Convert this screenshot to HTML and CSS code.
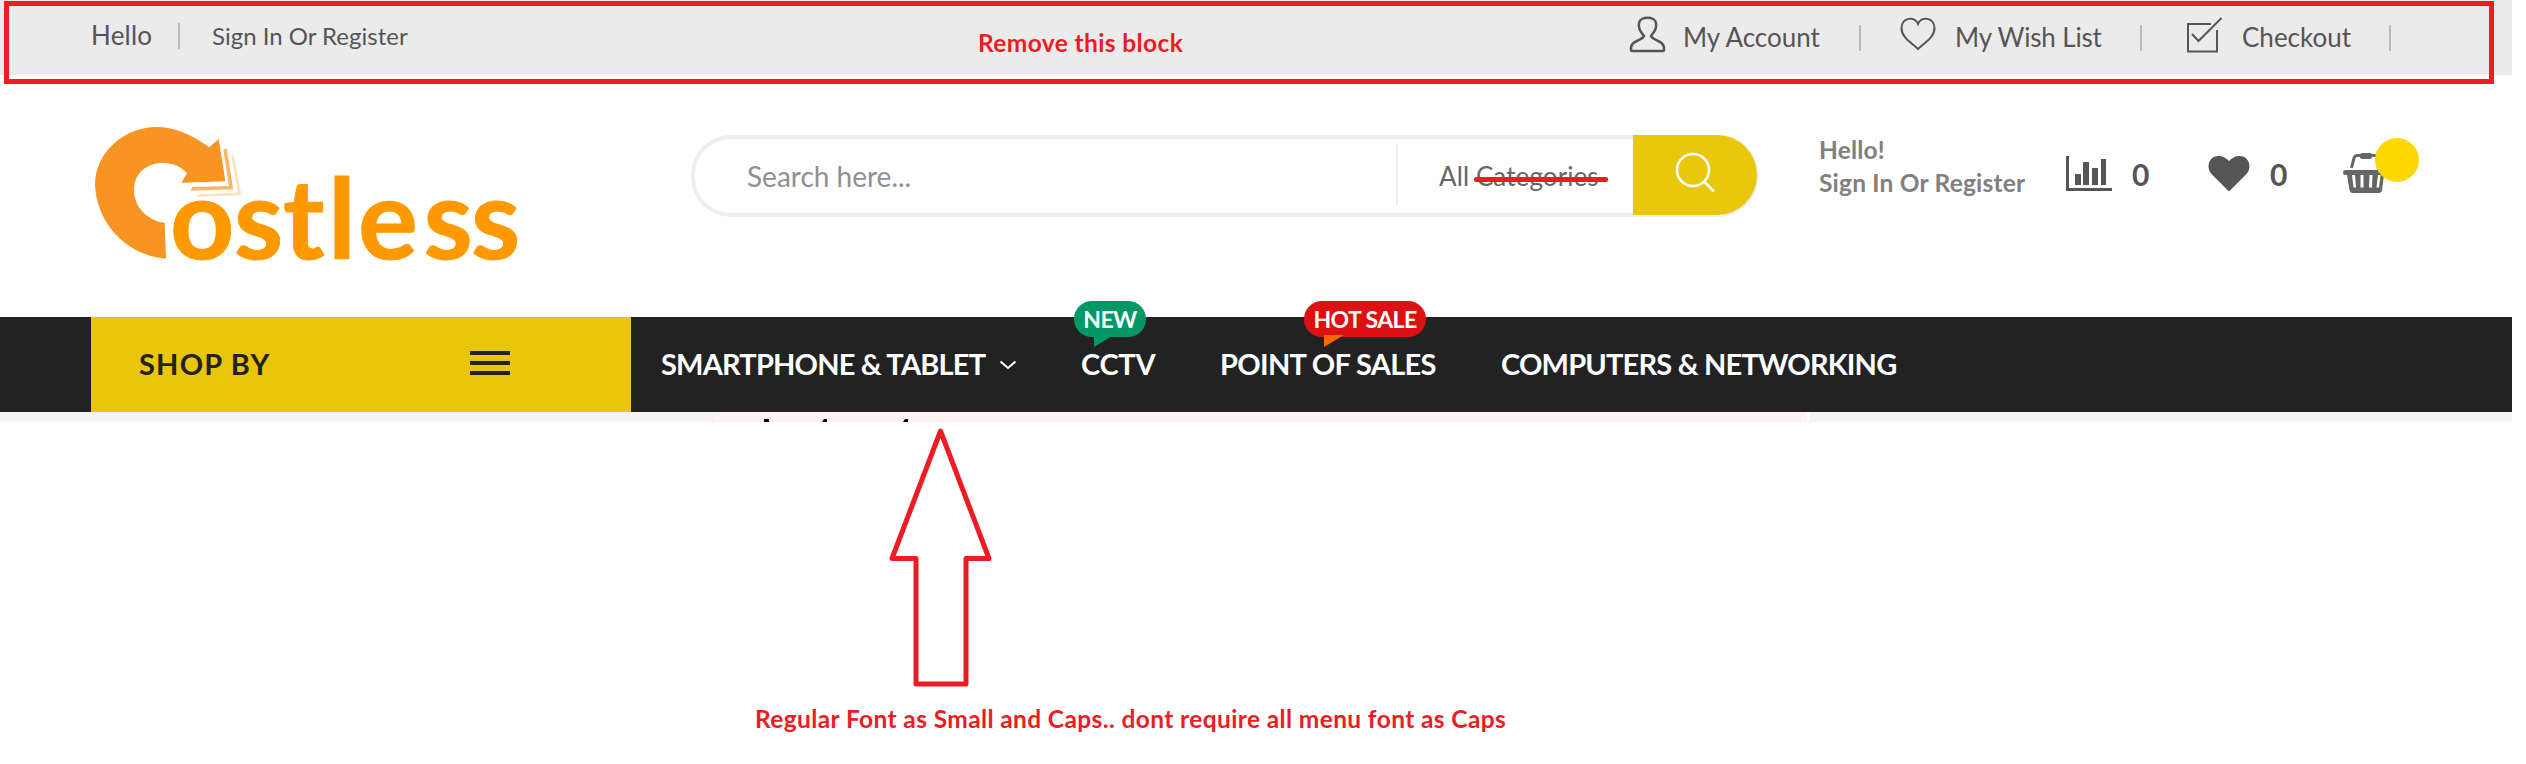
FILE: index.html
```html
<!DOCTYPE html>
<html lang="en">
<head>
<meta charset="utf-8">
<title>Costless</title>
<link rel="stylesheet" href="styles.css">
</head>
<body>
<div class="page">
  <div class="topbar">
    <span class="hello">Hello</span>
    <i class="sep sep-left"></i>
    <a class="signin">Sign In Or Register</a>
    <svg class="ico user" width="37" height="38" viewBox="0 0 37 38"><path d="M15 20C11 15 9 12 10 7C11 0 26 0 27 7C28 12 26 15 22 20C24 25 36 24 35 34Q35 35 34 35H3Q2 35 2 34C1 24 13 25 15 20Z"/></svg>
    <a class="link account">My Account</a>
    <i class="sep"></i>
    <svg class="ico heart" width="37" height="38" viewBox="0 0 37 38"><path d="M18 33C12 27 1 21 1.500 12C2 1 15 0 18 8C21 0 34 1 34.500 12C35 21 24 27 18 33Z"/></svg>
    <a class="link wish">My Wish List</a>
    <i class="sep"></i>
    <svg class="ico check" width="37" height="38" viewBox="0 0 37 38"><path d="M25 8H2V35.500H31V14M6 18L12.500 25L35.500 2"/></svg>
    <a class="link checkout">Checkout</a>
    <i class="sep"></i>
  </div>

  <header class="header">
    <svg class="logo" width="450" height="180" viewBox="0 0 450 180">
      <g transform="scale(.33333)">
        <path fill="#f79422" d="M258 446L254 339C200 330 162 290 162 240C162 190 200 159 248 159C280 159 305 170 321 190L304 218L436 214L416 87L388 112C330 70 280 51 230 51C130 51 45 130 45 225C50 340 140 437 258 446Z"/>
        <path fill="#fbb569" d="M430 120L440 115L460 238L331 242L337 231L447 228Z"/>
        <path fill="#fde0c1" d="M454 137L461 135L484 256L351 260L356 253L474 248Z"/>
      </g>
      <text class="logo-text" x="90 154 203 248 278 343.500 391" y="148.500">ostless</text>
    </svg>
    <div class="search">
      <span class="placeholder">Search here...</span>
      <span class="category"><span class="cat-text">All Categories</span><i class="strike"></i></span>
      <span class="search-btn"><svg width="40" height="40" viewBox="0 0 40 40"><circle cx="18" cy="18" r="16"/><path d="M29.500 30L39 39.500"/></svg></span>
    </div>
    <div class="greeting"><span class="g1">Hello!</span><span class="g2">Sign In Or Register</span></div>
    <svg class="bars" width="46" height="36" viewBox="0 0 46 36"><path d="M0 0H3V32H46V35H0ZM9 18H15V29H9ZM17 6H23V29H17ZM26 12H32V29H26ZM35 3H40V29H35Z"/></svg>
    <span class="count">0</span>
    <svg class="fav" width="42" height="36" viewBox="0 0 42 36"><path d="M21 35.500L3.500 18C-2 12 0 0 11 0C15 0 18 2 21 5C24 2 27 0 31 0C42 0 44 12 38.500 18Z"/></svg>
    <span class="count count-fav">0</span>
    <span class="cart">
      <svg width="46" height="42" viewBox="0 0 46 42"><path fill="none" stroke="#666" stroke-width="3" d="M8.500 16L11 6Q12 3.500 14 3.500H36"/><rect x="17" y="1" width="12" height="6" rx="2"/><path fill-rule="evenodd" d="M2 18H42Q44 18 44 20.500Q44 23 42 23H41L39 38Q38.500 41 36 41H10Q7 41 6.500 38L4 23H2Q0 23 0 20.500Q0 18 2 18ZM9 23L10.500 35.500H13L12 23ZM17.500 23V35.500H20.500V23ZM26.500 23L26 35.500H29L29.500 23ZM35 23L33.500 35.500H36L37.500 23Z"/></svg>
      <i class="cart-badge"></i>
    </span>
  </header>

  <nav class="nav">
    <div class="shop"><span class="shop-text">SHOP BY</span><span class="burger"><i></i><i></i><i></i></span></div>
    <a class="item smart">SMARTPHONE &amp; TABLET</a>
    <svg class="chev" width="18" height="10" viewBox="0 0 18 10"><path d="M1.500 1.500L9 8L16.500 1.500"/></svg>
    <a class="item cctv"><span class="t">CCTV</span><span class="badge new">NEW</span></a>
    <a class="item pos"><span class="t">POINT OF SALES</span><span class="badge hot">HOT SALE</span></a>
    <a class="item comp">COMPUTERS &amp; NETWORKING</a>
  </nav>
  <div class="strip"><div class="banner"><svg width="160" height="3" viewBox="0 0 160 3"><path d="M1 0H6V3H1ZM61 0H64V3H59ZM142 0H145V3H140Z"/></svg></div></div>
</div>

<div class="mark-box"></div>
<span class="mark note-top">Remove this block</span>
<svg class="mark arrow" width="106" height="264" viewBox="0 0 106 264"><path d="M52.500 5L4 132.500H28V258H78V132.500H101Z"/></svg>
<span class="mark note-bottom">Regular Font as Small and Caps.. dont require all menu font as Caps</span>
</body>
</html>
```
FILE: styles.css
```css
* { box-sizing: border-box; }
body { margin: 0; background: #fff; font-family: Lato, "Liberation Sans", sans-serif; width: 2526px; height: 764px; position: relative; overflow: hidden; }
.page { width: 2512px; }
span, a { white-space: nowrap; }
svg { display: block; flex: none; }

.topbar { height: 75px; background: #ebebeb; display: flex; align-items: flex-start; padding-left: 91px; color: #555; }
.hello { font-size: 26px; line-height: 70px; width: 87px; letter-spacing: .2px; }
.sep { width: 2px; height: 26px; background: #bbb; margin-top: 25px; flex: none; }
.sep-left { margin-top: 23px; }
.signin { font-size: 24px; line-height: 71px; margin-left: 32px; width: 1417px; }
.ico { margin-top: 16px; fill: none; stroke: #555; stroke-width: 2; }
.user { stroke-width: 2.5; }
.link { font-size: 26px; line-height: 74px; }
.account { margin-left: 17px; width: 176px; }
.heart { margin-left: 39px; }
.wish { margin-left: 18px; width: 185px; letter-spacing: -.15px; }
.check { margin-left: 44px; }
.checkout { margin-left: 19px; width: 147px; }

.header { height: 242px; display: flex; align-items: flex-start; }
.logo { margin: 35px 0 0 80px; }
.logo-text { font-family: Lato, sans-serif; font-weight: 700; font-size: 112px; fill: #ff9900; stroke: #ff9900; stroke-width: 1; }
.search { margin: 60px 0 0 161px; width: 1067px; height: 82px; border: 4px solid #eee; border-radius: 40px; display: flex; position: relative; }
.placeholder { margin-left: 52px; width: 649px; font-size: 28px; line-height: 74px; color: #909090; }
.category { margin-top: 5px; height: 62px; width: 237px; border-left: 2px solid #eee; padding-left: 41px; font-size: 26px; letter-spacing: .1px; line-height: 64px; color: #666; position: relative; }
.strike { position: absolute; left: 76px; top: 33px; width: 134px; height: 5px; border-radius: 2px; background: #ed1c24; }
.search-btn { position: absolute; left: 938px; top: -4px; width: 124px; height: 80px; background: #e9c70b; border-radius: 0 40px 40px 0; padding: 17px 0 0 42px; }
.search-btn svg { fill: none; stroke: #fff; stroke-width: 2.6; }
.greeting { margin: 58px 0 0 61px; width: 247px; display: flex; flex-direction: column; font-size: 24.5px; letter-spacing: .2px; font-weight: 700; line-height: 33px; color: #808080; }
.bars { margin-top: 81px; fill: #555; }
.count { margin: 81px 0 0 20px; width: 76px; font-size: 30px; font-weight: 700; line-height: 36px; color: #555; }
.fav { margin-top: 81px; fill: #555; }
.count-fav { width: 73px; }
.cart { margin-top: 77px; position: relative; fill: #666; }
.cart-badge { position: absolute; left: 32px; top: -14px; width: 44px; height: 44px; border-radius: 50%; background: #fdd700; }

.nav { height: 95px; background: #222; display: flex; align-items: flex-start; padding-left: 91px; color: #fff; font-weight: 700; font-size: 29px; line-height: 94px; }
.shop { width: 540px; height: 95px; background: #e9c60b; color: #222; display: flex; padding-left: 48px; font-size: 29px; letter-spacing: 1.2px; }
.shop-text { width: 331px; }
.burger { display: flex; flex-direction: column; gap: 6px; padding-top: 34px; }
.burger i { width: 40px; height: 4px; background: #222; }
.smart { margin-left: 30px; width: 338px; }
.chev { margin-top: 43px; fill: none; stroke: #fff; stroke-width: 2; }
.item { position: relative; letter-spacing: -.81px; }
.cctv { margin-left: 64px; width: 139px; }
.cctv .t { letter-spacing: -.3px; }
.pos { width: 281px; }
.pos .t { letter-spacing: -.68px; }
.badge { position: absolute; top: -16px; height: 36px; border-radius: 18px; font-size: 23px; line-height: 36px; text-align: center; letter-spacing: -.6px; }
.badge::after { content: ""; position: absolute; left: 20px; top: 35px; width: 18px; height: 11px; background: inherit; clip-path: polygon(0 0, 100% 0, 0 100%); }
.new { left: -7px; width: 72px; background: #009966; }
.hot { left: 84px; width: 122px; background: #dd1111; }
.hot::after { background: #ff6600; top: 34px; width: 20px; height: 12px; }
.strip { height: 10px; background: #f7f2f4; padding-left: 714px; }
.banner { width: 1096px; height: 10px; background: #fff4f1; border-right: 3px solid #fff; padding: 7px 0 0 49px; }

.mark-box { position: absolute; left: 4px; top: 1px; width: 2490px; height: 83px; border: 5px solid #ed1c24; }
.mark { position: absolute; color: #ed1c24; font-weight: 700; font-size: 24.5px; letter-spacing: .38px; line-height: 30px; white-space: nowrap; }
.note-top { left: 978px; top: 28px; }
.note-bottom { left: 755px; top: 704px; }
.arrow { left: 888px; top: 426px; fill: none; stroke: #ed1c24; stroke-width: 5; stroke-linejoin: round; }
```
